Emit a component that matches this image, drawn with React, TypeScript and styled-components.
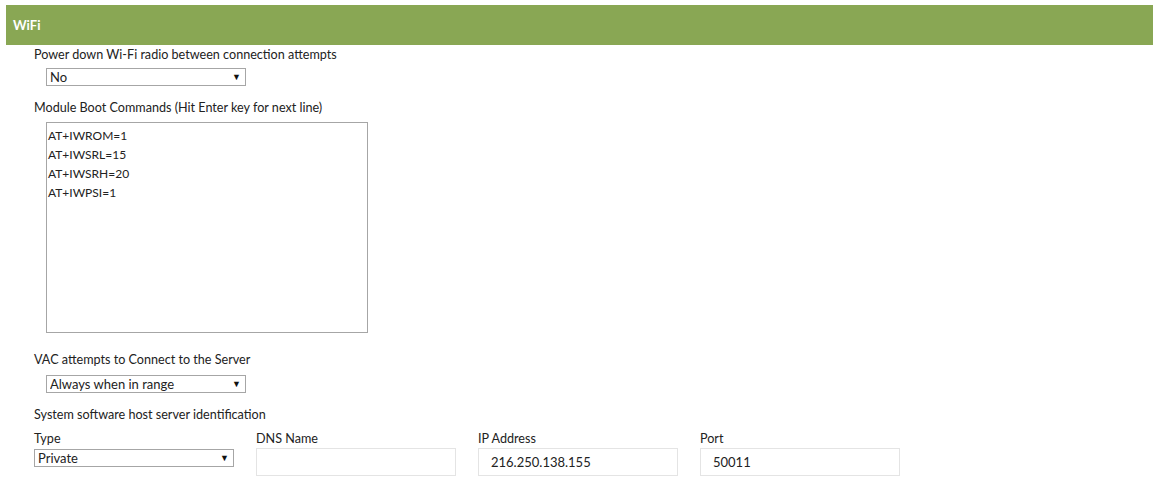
import styled, { createGlobalStyle } from 'styled-components';

const GlobalStyle = createGlobalStyle`
  body {
    margin: 0;
    background: #ffffff;
    font-family: Lato, "Open Sans", Arial, sans-serif;
    color: #222222;
  }
`;

const Page = styled.div`
  padding-top: 5px;
`;

const Header = styled.div`
  margin-left: 6px;
  height: 40px;
  display: flex;
  align-items: center;
  padding-left: 7px;
  background: #89a754;
  color: #ffffff;
  font-size: 13px;
  font-weight: 700;
`;

const Body = styled.div`
  padding-left: 34px;
  display: flex;
  flex-direction: column;
`;

const Label = styled.div<{ $top: number }>`
  margin-top: ${p => p.$top}px;
  font-size: 12.6px;
  line-height: 16px;
  height: 16px;
`;

const Control = styled.div<{ $top: number; $indent?: number }>`
  margin-top: ${p => p.$top}px;
  margin-left: ${p => p.$indent ?? 12}px;
`;

const SelectWrap = styled.div`
  position: relative;
  width: 200px;
  height: 18px;

  &::after {
    content: '▼';
    position: absolute;
    right: 5px;
    top: 2px;
    font-size: 9px;
    line-height: 14px;
    color: #111111;
    pointer-events: none;
  }
`;

const Select = styled.select`
  appearance: none;
  -webkit-appearance: none;
  display: block;
  box-sizing: border-box;
  width: 200px;
  height: 18px;
  margin: 0;
  padding: 0 0 0 3px;
  border: 1px solid #a6a6a6;
  border-radius: 0;
  background: #ffffff;
  font-family: Lato, "Open Sans", Arial, sans-serif;
  font-size: 13px;
  color: #222222;
`;

const Commands = styled.textarea`
  box-sizing: border-box;
  display: block;
  width: 322px;
  height: 211px;
  margin: 0;
  padding: 3px 1px;
  border: 1px solid #a6a6a6;
  resize: none;
  font-family: Lato, "Open Sans", Arial, sans-serif;
  font-size: 12px;
  line-height: 19px;
  color: #222222;
`;

const HostRow = styled.div`
  display: grid;
  grid-template-columns: repeat(4, 200px);
  column-gap: 22px;
  margin-top: 8px;
`;

const Column = styled.div`
  display: flex;
  flex-direction: column;
`;

const ColLabel = styled.div`
  font-size: 12.6px;
  line-height: 16px;
  height: 16px;
`;

const TextInput = styled.input`
  display: block;
  box-sizing: border-box;
  width: 200px;
  height: 28px;
  margin: 1px 0 0;
  padding: 0 12px;
  border: 1px solid #e4e4e4;
  border-radius: 0;
  font-family: Lato, "Open Sans", Arial, sans-serif;
  font-size: 13px;
  color: #222222;
`;

const bootCommands = ['AT+IWROM=1', 'AT+IWSRL=15', 'AT+IWSRH=20', 'AT+IWPSI=1'].join('\n');

const Dropdown = ({ value, options }: { value: string; options: string[] }) => (
  <SelectWrap>
    <Select defaultValue={value}>
      {options.map(o => (
        <option key={o}>{o}</option>
      ))}
    </Select>
  </SelectWrap>
);

const App = () => (
  <Page>
    <GlobalStyle />
    <Header>WiFi</Header>
    <Body>
      <Label $top={2}>Power down Wi-Fi radio between connection attempts</Label>
      <Control $top={5}>
        <Dropdown value="No" options={['No', 'Yes']} />
      </Control>

      <Label $top={14}>Module Boot Commands (Hit Enter key for next line)</Label>
      <Control $top={6}>
        <Commands defaultValue={bootCommands} />
      </Control>

      <Label $top={19}>VAC attempts to Connect to the Server</Label>
      <Control $top={7}>
        <Dropdown value="Always when in range" options={['Always when in range', 'Never']} />
      </Control>

      <Label $top={14}>System software host server identification</Label>
      <HostRow>
        <Column>
          <ColLabel>Type</ColLabel>
          <Control $top={2} $indent={0}>
            <Dropdown value="Private" options={['Private', 'Public']} />
          </Control>
        </Column>
        <Column>
          <ColLabel>DNS Name</ColLabel>
          <TextInput defaultValue="" />
        </Column>
        <Column>
          <ColLabel>IP Address</ColLabel>
          <TextInput defaultValue="216.250.138.155" />
        </Column>
        <Column>
          <ColLabel>Port</ColLabel>
          <TextInput defaultValue="50011" />
        </Column>
      </HostRow>
    </Body>
  </Page>
);

export default App;
